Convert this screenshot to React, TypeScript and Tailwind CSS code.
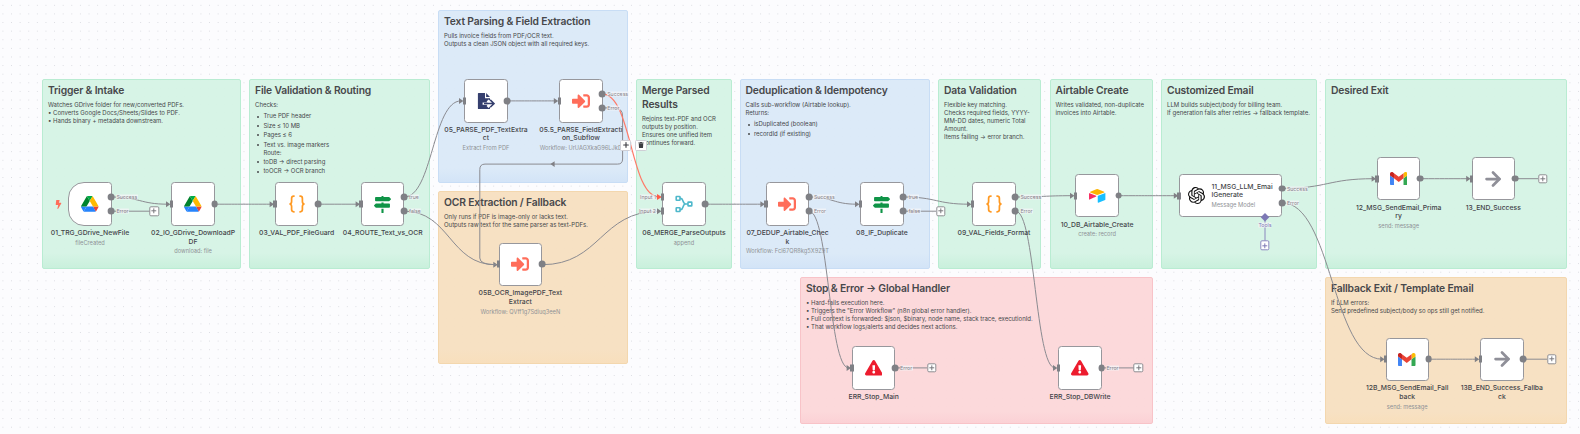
import React from "react";
import { FaMapSigns, FaSignInAlt, FaExclamationTriangle, FaBolt, FaTrash } from "react-icons/fa";
import { SiOpenai } from "react-icons/si";
import { ArrowRight, Plus } from "lucide-react";

type Tone = "green" | "blue" | "orange" | "red";

const toneClass: Record<Tone, string> = {
  green: "border-[#b9ecd2] bg-linear-to-b from-[#d7f4e6] from-92% to-[#c9f0dc]",
  blue: "border-[#c8ddf5] bg-linear-to-b from-[#dceaf8] from-92% to-[#d3e4f7]",
  orange: "border-[#f3d7ae] bg-linear-to-b from-[#f7e1c3] from-92% to-[#f8dfbc]",
  red: "border-[#f8c3c8] bg-linear-to-b from-[#fcd9db] from-92% to-[#fbd1d5]",
};

type Note = {
  x: number;
  y: number;
  w: number;
  h: number;
  tone: Tone;
  title: string[];
  lines?: string[];
  items?: string[][];
};

const notes: Note[] = [
  { x: 42, y: 79, w: 199, h: 190, tone: "green", title: ["Trigger & Intake"], lines: ["Watches GDrive folder for new/converted PDFs.", "• Converts Google Docs/Sheets/Slides to PDF.", "• Hands binary + metadata downstream."] },
  { x: 249, y: 79, w: 181, h: 190, tone: "green", title: ["File Validation & Routing"], lines: ["Checks:"], items: [["True PDF header"], ["Size ≤ 10 MB"], ["Pages ≤ 6"], ["Text vs. image markers", "Route:"], ["toDB → direct parsing"], ["toOCR → OCR branch"]] },
  { x: 438, y: 10, w: 190, h: 173, tone: "blue", title: ["Text Parsing & Field Extraction"], lines: ["Pulls invoice fields from PDF/OCR text.", "Outputs a clean JSON object with all required keys."] },
  { x: 438, y: 191, w: 190, h: 173, tone: "orange", title: ["OCR Extraction / Fallback"], lines: ["Only runs if PDF is image-only or lacks text.", "Outputs raw text for the same parser as text-PDFs."] },
  { x: 636, y: 79, w: 95.5, h: 190, tone: "green", title: ["Merge Parsed", "Results"], lines: ["Rejoins text-PDF and OCR", "outputs by position.", "Ensures one unified item", "continues forward."] },
  { x: 739.5, y: 79, w: 190, h: 190, tone: "blue", title: ["Deduplication & Idempotency"], lines: ["Calls sub-workflow (Airtable lookup).", "Returns:"], items: [["isDuplicated (boolean)"], ["recordId (if existing)"]] },
  { x: 938, y: 79, w: 103, h: 190, tone: "green", title: ["Data Validation"], lines: ["Flexible key matching.", "Checks required fields, YYYY-", "MM-DD dates, numeric Total", "Amount.", "Items failing → error branch."] },
  { x: 1049.5, y: 79, w: 103.5, h: 190, tone: "green", title: ["Airtable Create"], lines: ["Writes validated, non-duplicate", "invoices into Airtable."] },
  { x: 1161, y: 79, w: 156, h: 190, tone: "green", title: ["Customized Email"], lines: ["LLM builds subject/body for billing team.", "If generation fails after retries → fallback template."] },
  { x: 1325, y: 79, w: 242, h: 190, tone: "green", title: ["Desired Exit"] },
  { x: 800, y: 277, w: 353, h: 147, tone: "red", title: ["Stop & Error → Global Handler"], lines: ["• Hard-fails execution here.", "• Triggers the \"Error Workflow\" (n8n global error handler).", "• Full context is forwarded: $json, $binary, node name, stack trace, executionId.", "• That workflow logs/alerts and decides next actions."] },
  { x: 1325, y: 277, w: 242, h: 147, tone: "orange", title: ["Fallback Exit / Template Email"], lines: ["If LLM errors:", "Send predefined subject/body so ops still get notified."] },
];

function DriveIcon() {
  return (
    <svg viewBox="0 0 87.3 78" className="w-[17.5px]">
      <path fill="#2684fc" d="m6.6 66.85 3.85 6.65c.8 1.4 1.95 2.5 3.3 3.3l13.75-23.8h-27.5c0 1.55.4 3.1 1.2 4.5z" />
      <path fill="#00832d" d="m43.65 25-13.75-23.8c-1.35.8-2.5 1.9-3.3 3.3l-25.4 44a9.06 9.06 0 0 0-1.2 4.5h27.5z" />
      <path fill="#ea4335" d="m73.55 76.8c1.35-.8 2.5-1.9 3.3-3.3l1.6-2.75 7.65-13.25c.8-1.4 1.2-2.95 1.2-4.5h-27.502l5.852 11.5z" />
      <path fill="#00ac47" d="m43.65 25 13.75-23.8c-1.35-.8-2.9-1.2-4.5-1.2h-18.5c-1.6 0-3.15.45-4.5 1.2z" />
      <path fill="#2684fc" d="m59.8 53h-32.3l-13.75 23.8c1.35.8 2.9 1.2 4.5 1.2h50.8c1.6 0 3.15-.45 4.5-1.2z" />
      <path fill="#ffba00" d="m73.4 26.5-12.7-22c-.8-1.4-1.95-2.5-3.3-3.3l-13.75 23.8 16.15 28h27.45c0-1.55-.4-3.1-1.2-4.5z" />
    </svg>
  );
}

function BracesIcon() {
  return (
    <svg viewBox="0 0 18 18" className="w-[18px]" fill="none" stroke="#ff9922" strokeWidth="1.7" strokeLinecap="butt">
      <path d="M6.6 1.2H5.8C4.2 1.2 3.6 2 3.6 3.4V6.4C3.6 8 2.9 9 1.4 9C2.9 9 3.6 10 3.6 11.6V14.6C3.6 16 4.2 16.8 5.8 16.8H6.6" />
      <path d="M11.4 1.2H12.2C13.8 1.2 14.4 2 14.4 3.4V6.4C14.4 8 15.1 9 16.6 9C15.1 9 14.4 10 14.4 11.6V14.6C14.4 16 13.8 16.8 12.2 16.8H11.4" />
    </svg>
  );
}

function ExtractIcon() {
  return (
    <svg viewBox="0 0 18 18" className="w-[18px]">
      <path fill="#353f6e" d="M1.6 1H8V6.2H13V8.6L11.5 7.4L9.6 9.4L10.6 10.4H5.6V12.8H10.6L9.6 13.9L11.5 15.9L13 14.8V16.4Q13 17 12.4 17H1.6Q.9 17 .9 16.4V1.6Q.9 1 1.6 1Z" />
      <path fill="#353f6e" d="M9.1 1L13 5.1H9.1Z" />
      <path fill="none" stroke="#353f6e" strokeWidth="1.5" d="M7 11.6H17M13.2 7.9L17 11.6L13.2 15.3" />
    </svg>
  );
}

function MergeIcon() {
  return (
    <svg viewBox="0 0 18 18" className="w-[18px]" fill="none" stroke="#4fb8cb" strokeWidth="1.6">
      <rect x="1.2" y="1.5" width="3.8" height="3.8" rx=".5" />
      <rect x="1.2" y="12.7" width="3.8" height="3.8" rx=".5" />
      <rect x="13" y="7.1" width="3.8" height="3.8" rx=".5" />
      <path d="M5 3.4H5.8C8.6 3.4 7.4 9 10.6 9H13M5 14.6H5.8C8.6 14.6 7.4 9 10.6 9" />
    </svg>
  );
}

function AirtableIcon() {
  return (
    <svg viewBox="0 0 200 170" className="w-[18.5px]">
      <path fill="#fcb400" d="M90.04 12.37 24.08 39.66c-3.67 1.52-3.63 6.73.06 8.19l66.23 26.27a24.58 24.58 0 0 0 18.12 0l66.24-26.27c3.68-1.46 3.72-6.67.05-8.19l-65.95-27.29a24.58 24.58 0 0 0-18.79 0" />
      <path fill="#18bfff" d="M105.31 88.46v65.62c0 3.12 3.15 5.26 6.05 4.11l73.8-28.65a4.42 4.42 0 0 0 2.79-4.11V59.81c0-3.12-3.15-5.26-6.05-4.11l-73.8 28.65a4.42 4.42 0 0 0-2.79 4.11" />
      <path fill="#f82b60" d="m88.08 91.85-21.9 10.57-2.22 1.08-46.24 22.15c-2.93 1.41-6.67-.72-6.67-3.98V60.09c0-1.18.6-2.2 1.42-2.96.34-.34.72-.62 1.12-.85 1.11-.66 2.69-.84 4.04-.31l70.1 27.78c3.57 1.41 3.85 6.41.35 8.1" />
    </svg>
  );
}

function GmailIcon() {
  return (
    <svg viewBox="52 42 88 66" className="w-[17.5px]">
      <path fill="#4285f4" d="M58 108h14V74L52 59v43c0 3.32 2.69 6 6 6" />
      <path fill="#34a853" d="M120 108h14c3.32 0 6-2.69 6-6V59l-20 15" />
      <path fill="#fbbc04" d="M120 48v26l20-15v-8c0-7.42-8.47-11.65-14.4-7.2" />
      <path fill="#ea4335" d="M72 74V48l24 18 24-18v26L96 92" />
      <path fill="#c5221f" d="M52 51v8l20 15V48l-5.6-4.2c-5.94-4.45-14.4-.22-14.4 7.2" />
    </svg>
  );
}

const icons = {
  drive: <DriveIcon />,
  braces: <BracesIcon />,
  signs: <FaMapSigns className="size-[17px] text-[#0f9447]" />,
  extract: <ExtractIcon />,
  signin: <FaSignInAlt className="size-[18px] text-[#ff6d5a]" />,
  merge: <MergeIcon />,
  airtable: <AirtableIcon />,
  gmail: <GmailIcon />,
  arrow: <ArrowRight className="size-[22px] text-[#8f8f98]" strokeWidth={3} />,
  alert: <FaExclamationTriangle className="size-[17.5px] text-[#ed1c2e]" />,
};

type FlowNode = {
  x: number;
  y: number;
  icon: keyof typeof icons;
  name: string[];
  sub?: string;
  trigger?: boolean;
  inputs?: number[];
  outputs?: [number, string][];
};

const single: [number, string][] = [[21.7, ""]];
const okError: [number, string][] = [[14.6, "Success"], [28.8, "Error"]];
const bool: [number, string][] = [[14.6, "true"], [28.8, "false"]];

const nodes: FlowNode[] = [
  { x: 68.3, y: 182.4, icon: "drive", name: ["01_TRG_GDrive_NewFile"], sub: "fileCreated", trigger: true, inputs: [], outputs: okError },
  { x: 171.4, y: 182.4, icon: "drive", name: ["02_IO_GDrive_DownloadP", "DF"], sub: "download: file", outputs: single },
  { x: 275, y: 182.4, icon: "braces", name: ["03_VAL_PDF_FileGuard"], outputs: single },
  { x: 361, y: 182.4, icon: "signs", name: ["04_ROUTE_Text_vs_OCR"], outputs: bool },
  { x: 464.3, y: 79.2, icon: "extract", name: ["05_PARSE_PDF_TextExtra", "ct"], sub: "Extract From PDF", outputs: single },
  { x: 559.2, y: 79.2, icon: "signin", name: ["05.5_PARSE_FieldExtracti", "on_Subflow"], sub: "Workflow: UrUAGXkaG96LJkD", outputs: okError },
  { x: 498.7, y: 242.8, icon: "signin", name: ["05B_OCR_ImagePDF_Text", "Extract"], sub: "Workflow: QVff1g7Sdiuq3eeN", outputs: single },
  { x: 662.3, y: 182.4, icon: "merge", name: ["06_MERGE_ParseOutputs"], sub: "append", inputs: [14.6, 28.8], outputs: single },
  { x: 765.8, y: 182.4, icon: "signin", name: ["07_DEDUP_Airtable_Chec", "k"], sub: "Workflow: Fcl67QR8kg5X9Z9T", outputs: okError },
  { x: 860.3, y: 182.4, icon: "signs", name: ["08_IF_Duplicate"], outputs: bool },
  { x: 972.3, y: 182.4, icon: "braces", name: ["09_VAL_Fields_Format"], outputs: okError },
  { x: 1075.4, y: 174, icon: "airtable", name: ["10_DB_Airtable_Create"], sub: "create: record", outputs: single },
  { x: 1377, y: 157, icon: "gmail", name: ["12_MSG_SendEmail_Prima", "ry"], sub: "send: message", outputs: single },
  { x: 1471.6, y: 157, icon: "arrow", name: ["13_END_Success"], outputs: single },
  { x: 1385.5, y: 337.5, icon: "gmail", name: ["12B_MSG_SendEmail_Fall", "back"], sub: "send: message", outputs: single },
  { x: 1480.2, y: 337.5, icon: "arrow", name: ["13B_END_Success_Fallba", "ck"], outputs: single },
  { x: 852, y: 346.3, icon: "alert", name: ["ERR_Stop_Main"], outputs: [[21.7, "Error"]] },
  { x: 1058.4, y: 346.3, icon: "alert", name: ["ERR_Stop_DBWrite"], outputs: [[21.7, "Error"]] },
];

// Source point and target point of every left-to-right connection.
const edges: [number, number, number, number][] = [
  [111.5, 197, 171, 204.2],
  [214.7, 204.2, 274.6, 204.2],
  [318.3, 204.2, 360.6, 204.2],
  [404.2, 197, 464, 100.9],
  [404.2, 211.2, 498.3, 264.7],
  [507.6, 100.9, 558.8, 100.9],
  [542, 264.7, 662, 211.2],
  [705.6, 204.2, 765.4, 204.2],
  [809, 197, 860, 204.2],
  [809, 211.2, 851.6, 367.9],
  [903.6, 197, 972, 204.2],
  [1015.6, 197, 1075, 195.7],
  [1015.6, 211.2, 1058, 367.9],
  [1118.6, 195.7, 1178.8, 195.7],
  [1282, 188.4, 1376.6, 178.7],
  [1282, 202.8, 1385.2, 359.2],
  [1420.3, 178.7, 1471.2, 178.7],
  [1428.8, 359.2, 1479.8, 359.2],
];

function bezier([x1, y1, x2, y2]: [number, number, number, number]) {
  const end = x2 - 3;
  const mid = (x1 + end) / 2;
  return `M${x1} ${y1}C${mid} ${y1} ${mid} ${y2} ${end} ${y2}`;
}

function Edges() {
  return (
    <svg className="absolute inset-0" width="1580" height="434" fill="none" stroke="#8b8b91" strokeWidth="1">
      {edges.map((e) => (
        <g key={e.join()}>
          <path d={bezier(e)} />
          <path fill="#808085" stroke="none" d={`M${e[2] - 5} ${e[3] - 3}L${e[2] - 0.6} ${e[3]}L${e[2] - 5} ${e[3] + 3}Z`} />
        </g>
      ))}
      <path d="M602 107.9H614Q622.6 107.9 622.6 116V159Q622.6 164.1 617.6 164.1H485Q479.8 164.1 479.8 169.5V258Q479.8 264.7 496 264.7" />
      <path fill="#808085" stroke="none" d="M550.4 164.1L554.6 161.3V166.9Z" />
      <path stroke="#ff7a68" strokeWidth="1.2" d="M602 93.8C632 93.8 630 197 659 197" />
      <path fill="#ff5a48" stroke="none" d="M657 194L661.8 197L657 200Z" />
      <path d="M111 211.2H150M903 211.2H936M1514 178.7H1538M1523 359.2H1547M895 367.9H927M1101 367.9H1134" />
      <path stroke="#8a86bd" d="M1265 217V241" />
    </svg>
  );
}

function StickyNote({ note }: { note: Note }) {
  return (
    <section
      className={`absolute flex flex-col rounded-[2px] border pt-[3.4px] pl-[5px] whitespace-nowrap ${toneClass[note.tone]}`}
      style={{ left: note.x, top: note.y, width: note.w, height: note.h }}
    >
      <h2 className="text-[10.3px] leading-[14px] font-semibold tracking-[-0.15px] text-[#47484b]">
        {note.title.map((t) => (
          <div key={t}>{t}</div>
        ))}
      </h2>
      <div className="pt-[3.8px] text-[6px] leading-[8px] text-[#46474a]">
        {note.lines?.map((t) => (
          <div key={t}>{t}</div>
        ))}
        {note.items && (
          <ul className="flex flex-col gap-[1.45px] pt-[3px] pl-[2.4px]">
            {note.items.map((item) => (
              <li key={item[0]} className="flex gap-[4px]">
                <span className="mt-[3.4px] size-[2px] shrink-0 rounded-full bg-[#4a4b4e]" />
                <div>
                  {item.map((t) => (
                    <div key={t}>{t}</div>
                  ))}
                </div>
              </li>
            ))}
          </ul>
        )}
      </div>
    </section>
  );
}

function PortLabel({ x, y, text, end = false }: { x: number; y: number; text: string; end?: boolean }) {
  return (
    <span
      className={`absolute -translate-y-1/2 bg-[#f5f5f8]/75 px-[0.5px] text-[5.2px] leading-[5px] whitespace-nowrap text-[#87838b] ${end ? "-translate-x-full" : ""}`}
      style={{ left: x, top: y }}
    >
      {text}
    </span>
  );
}

function Port({ x, y }: { x: number; y: number }) {
  return <span className="absolute size-[6.8px] -translate-1/2 rounded-full bg-[#7f8085]" style={{ left: x, top: y }} />;
}

function InputPort({ y }: { y: number }) {
  return <span className="absolute -left-[1.6px] h-[7px] w-[3.4px] -translate-y-1/2 bg-[#7f8085]" style={{ top: y }} />;
}

function AddButton({ x, y, violet = false }: { x: number; y: number; violet?: boolean }) {
  return (
    <button
      className={`absolute flex size-[9.4px] -translate-1/2 items-center justify-center rounded-[1.6px] border bg-white ${violet ? "border-[#8d89c0] text-[#7d78b5]" : "border-[#8d8d92] text-[#77777c]"}`}
      style={{ left: x, top: y }}
    >
      <Plus className="size-[7px] shrink-0" strokeWidth={3.4} />
    </button>
  );
}

function NodeView({ node }: { node: FlowNode }) {
  return (
    <div className="absolute size-[43.4px]" style={{ left: node.x, top: node.y }}>
      <div
        className={`flex size-full items-center justify-center border border-[#97979c] bg-white ${node.trigger ? "rounded-l-[16px] rounded-r-[3.4px]" : "rounded-[3.4px]"}`}
      >
        {icons[node.icon]}
      </div>
      {(node.inputs ?? [21.7]).map((y) => (
        <InputPort key={y} y={y} />
      ))}
      {node.outputs?.map(([y, label]) => (
        <React.Fragment key={y}>
          <Port x={43.2} y={y} />
          {label && <PortLabel x={47.6} y={y} text={label} />}
        </React.Fragment>
      ))}
      <div className="absolute top-[46.5px] left-1/2 flex -translate-x-1/2 flex-col items-center whitespace-nowrap">
        <div className="text-center text-[6.8px] leading-[8.8px] font-medium text-[#434449]">
          {node.name.map((t) => (
            <div key={t}>{t}</div>
          ))}
        </div>
        {node.sub && <div className="pt-[1px] text-[5.7px] leading-[8px] text-[#8f9296]">{node.sub}</div>}
      </div>
    </div>
  );
}

function ModelNode() {
  return (
    <div className="absolute h-[43px] w-[103px]" style={{ left: 1179, top: 174 }}>
      <div className="flex size-full items-center gap-[7px] rounded-[3.4px] border border-[#97979c] bg-white pl-[7.5px]">
        <SiOpenai className="size-[17px] shrink-0 text-[#0d0d0d]" />
        <div className="pt-[1px] whitespace-nowrap">
          <div className="text-[6.8px] leading-[8.8px] font-medium text-[#434449]">11_MSG_LLM_Emai</div>
          <div className="text-[6.8px] leading-[8.8px] font-medium text-[#434449]">lGenerate</div>
          <div className="pt-[1.2px] text-[5.8px] leading-[8px] text-[#8f9296]">Message Model</div>
        </div>
      </div>
      <InputPort y={21.7} />
      <Port x={103} y={14.5} />
      <PortLabel x={107.4} y={14.5} text="Success" />
      <Port x={103} y={28.8} />
      <PortLabel x={107.4} y={28.8} text="Error" />
      <span className="absolute top-[43px] left-[86px] size-[5.6px] -translate-1/2 rotate-45 bg-[#7d78b5]" />
      <span className="absolute top-[51.3px] left-[86px] -translate-1/2 bg-[#f5f5f8]/80 text-[5.2px] leading-[5px] text-[#7d78b5]">Tools</span>
    </div>
  );
}

export default function App() {
  return (
    <main className="relative h-[434px] w-[1580px] overflow-hidden bg-[#fcfcfe] font-[Inter,sans-serif]">
      <svg className="absolute inset-0" width="1580" height="434">
        <defs>
          <pattern id="dots" x="-1.4" y="1" width="8.61" height="8.61" patternUnits="userSpaceOnUse">
            <circle cx="4.3" cy="4.3" r="0.5" fill="#d2d3d9" />
          </pattern>
        </defs>
        <rect width="1580" height="434" fill="url(#dots)" />
      </svg>
      {notes.map((n) => (
        <StickyNote key={n.title[0]} note={n} />
      ))}
      <Edges />
      <FaBolt className="absolute top-[199.5px] left-[54px] size-[9px] text-[#ff6d5a]" />
      {nodes.map((n) => (
        <NodeView key={n.name[0]} node={n} />
      ))}
      <ModelNode />
      <PortLabel x={656.5} y={197} text="Input 1" end />
      <PortLabel x={656.5} y={211.2} text="Input 2" end />
      <AddButton x={154.3} y={211.2} />
      <AddButton x={940.5} y={211.2} />
      <AddButton x={1542.7} y={178.7} />
      <AddButton x={1551.5} y={359.2} />
      <AddButton x={931.8} y={367.9} />
      <AddButton x={1138.4} y={367.9} />
      <AddButton x={1265} y={245.4} violet />
      <div className="absolute top-[140.3px] left-[620px] flex gap-[3.8px]">
        <button className="flex h-[10.4px] w-[11.4px] items-center justify-center rounded-[1.5px] border border-[#cfcfd6] bg-white text-[#3c3c42]">
          <Plus className="size-[8px] shrink-0" strokeWidth={3.4} />
        </button>
        <button className="flex h-[10.4px] w-[11.4px] items-center justify-center rounded-[1.5px] border border-[#cfcfd6] bg-white text-[#3c3c42]">
          <FaTrash className="size-[6px] shrink-0" />
        </button>
      </div>
    </main>
  );
}
